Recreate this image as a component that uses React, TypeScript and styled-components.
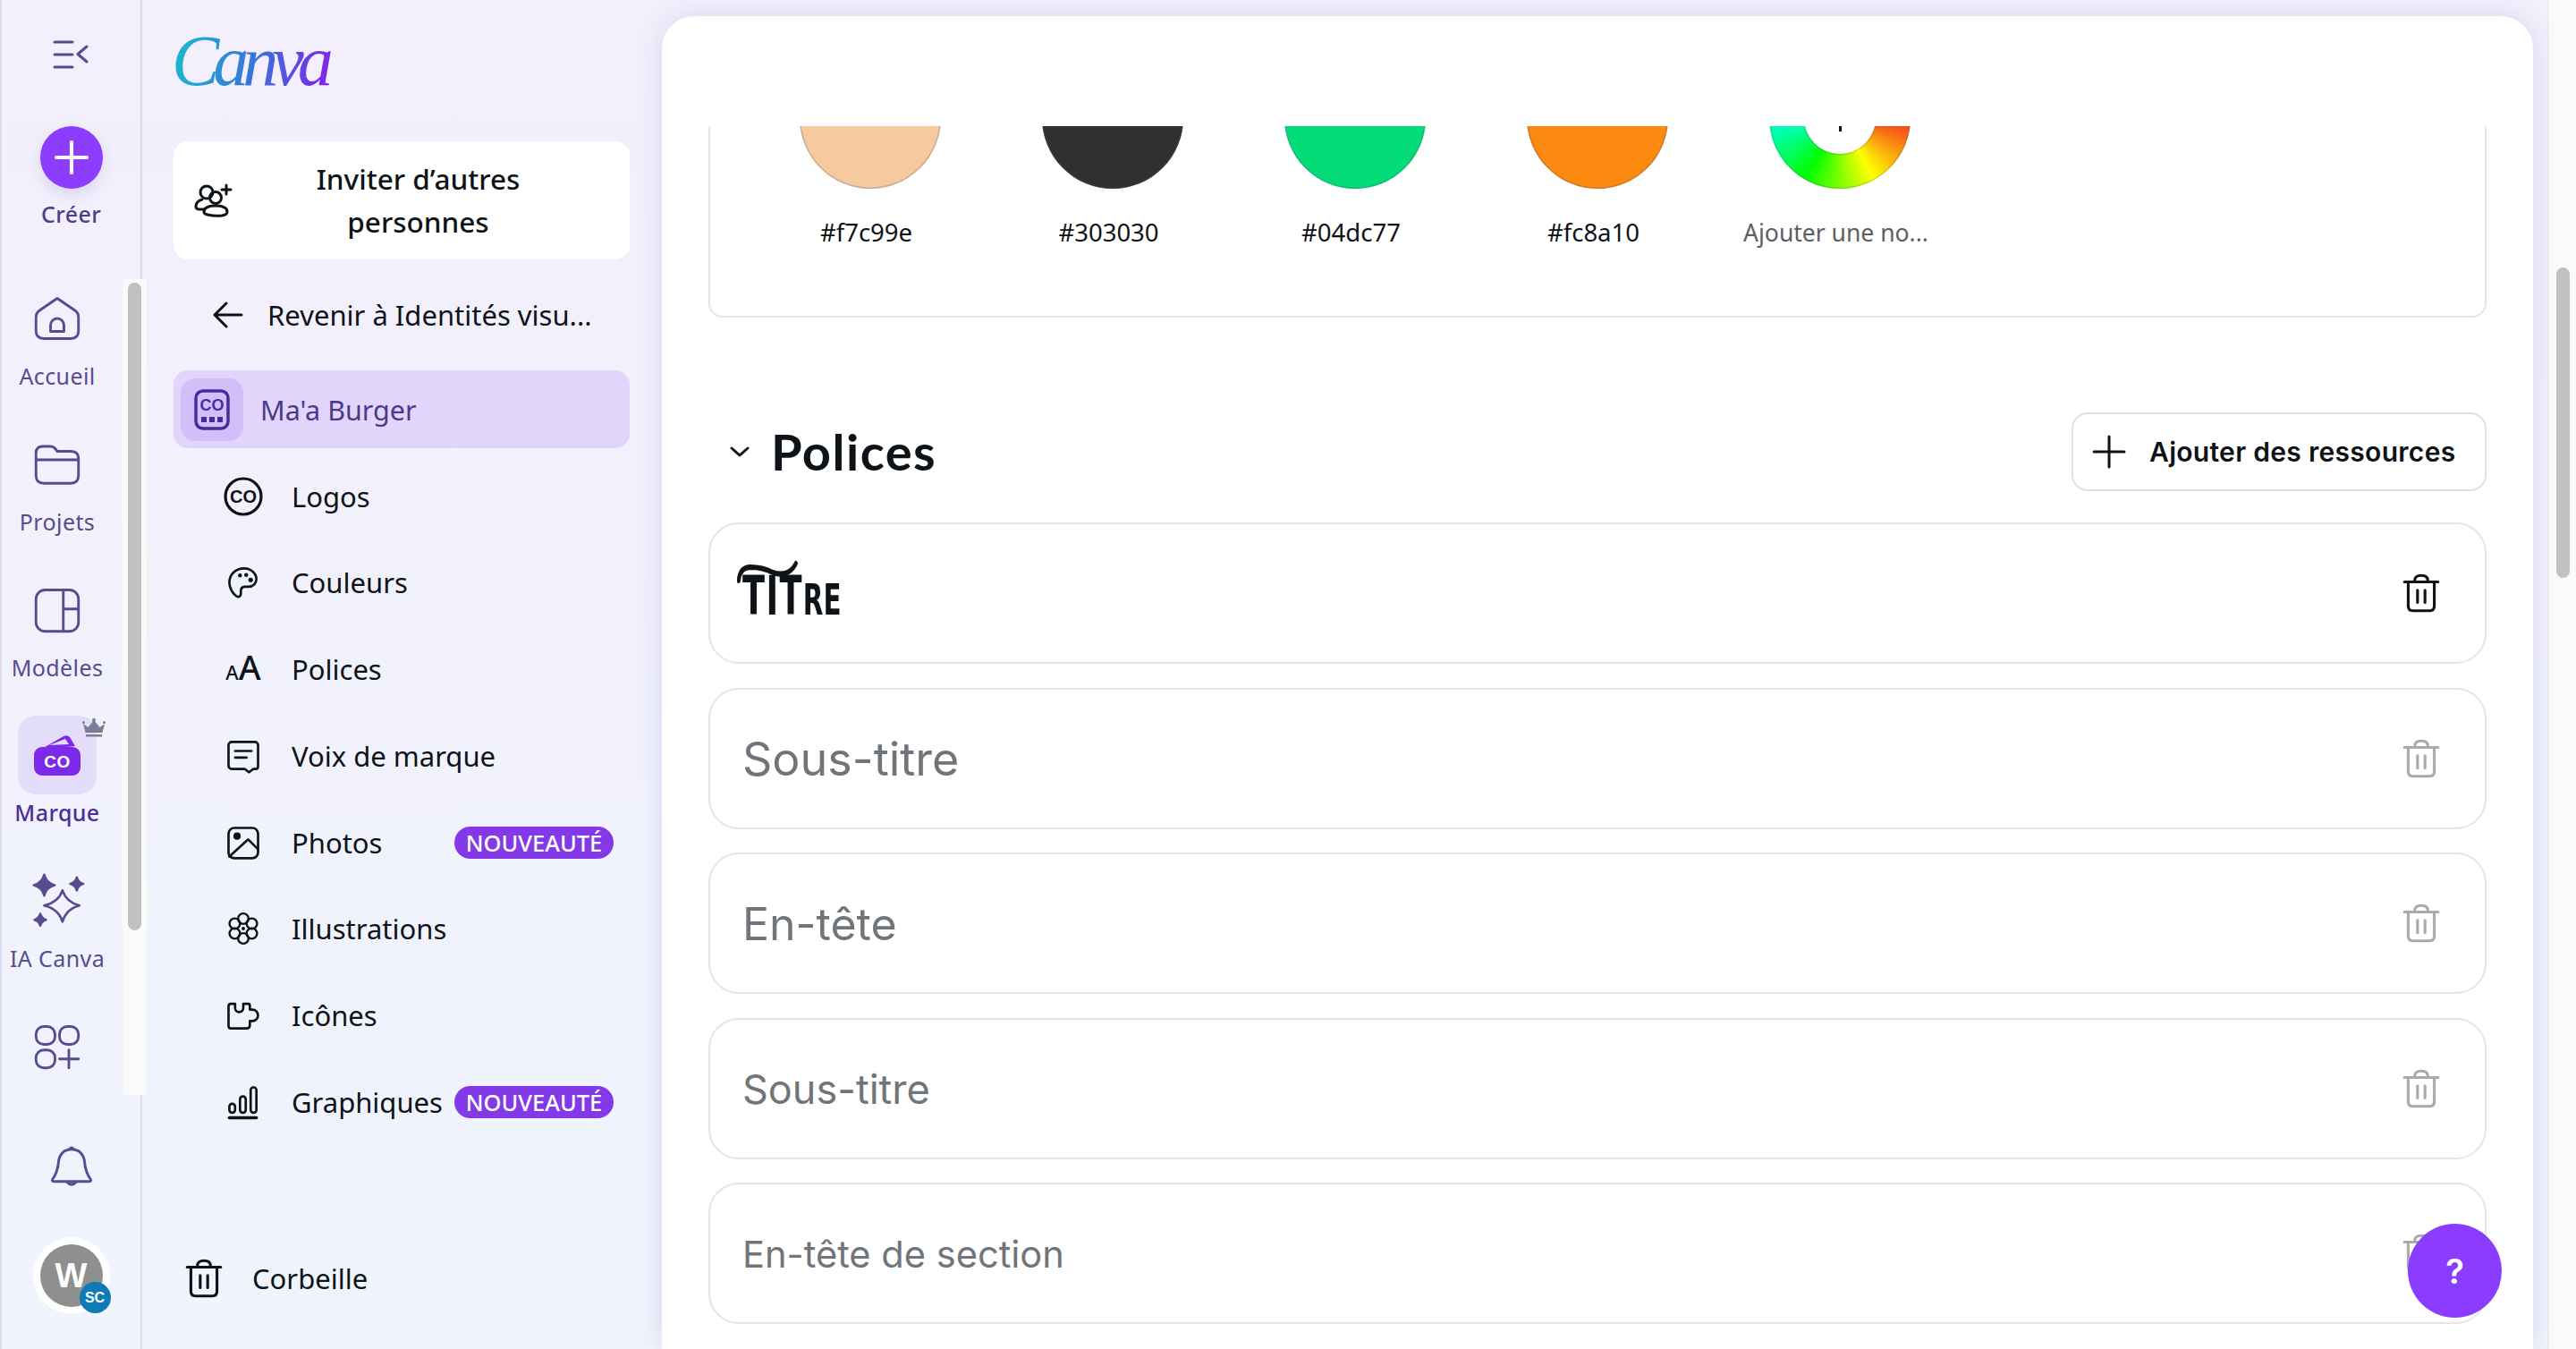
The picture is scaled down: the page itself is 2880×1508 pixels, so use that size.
import React from 'react'
import styled, { createGlobalStyle } from 'styled-components'
import { Plus } from 'lucide-react'

const GlobalStyle = createGlobalStyle`
    html, body {
        margin: 0;
        padding: 0;
        width: 2880px;
        height: 1508px;
        overflow: hidden;
        background: #f1f0fc;
    }
    * {
        box-sizing: border-box;
    }
`

const purple = '#8b3dff'
const railInk = '#5a4a8f'
const ink = '#0e1318'
const bodyFont = `"Noto Sans", "Liberation Sans", sans-serif`

interface IconProps {
    size?: number,
    color?: string,
    weight?: number
}

function Svg({ size = 44, color = ink, weight = 1.6, children }: IconProps & { children: React.ReactNode }) {
    return (
        <svg width={size} height={size} viewBox="0 0 24 24" fill="none" stroke={color} strokeWidth={weight} strokeLinecap="round" strokeLinejoin="round">
            {children}
        </svg>
    )
}

const HomeIcon = (p: IconProps) => (
    <Svg {...p}>
        <path d="M2.5 11.5q0-2 1.6-3.1L12 3l7.9 5.4q1.6 1.1 1.6 3.1v6q0 3.500-3.500 3.500H6q-3.500 0-3.500-3.500z" />
        <path d="M9 17.8V15a3 3 0 0 1 6 0v2.800z" />
    </Svg>
)
const FolderIcon = (p: IconProps) => (
    <Svg {...p}>
        <path d="M2.5 7q0-3 3-3H9q1.300 0 2 .9l1 1.300h6q3.500 0 3.500 3.300v7.500q0 3.500-3.500 3.500H6q-3.500 0-3.500-3.500z" />
        <path d="M2.5 10h19" />
    </Svg>
)
const TemplateIcon = (p: IconProps) => (
    <Svg {...p}>
        <rect x="2.5" y="3" width="19" height="18.5" rx="4" />
        <path d="M14.7 3v18.500M14.700 11.500h6.800" />
    </Svg>
)
const SparkIcon = (p: IconProps) => (
    <Svg {...p}>
        <path d="M14 8q1.500 4.500 6.500 5.800-5 1.300-6.500 6.200-1.500-4.900-7-6.200 5.500-1.300 7-5.800z" />
        <path d="M7 2q.8 3.200 4 4-3.200.8-4 4-.8-3.200-4-4 3.200-.8 4-4zM19.500 3q.5 2 2.500 2.500-2 .5-2.500 2.500-.5-2-2.500-2.500 2-.5 2.500-2.500zM5.500 17q.5 1.700 2.200 2.300-1.700.5-2.200 2.200-.5-1.700-2.200-2.200 1.700-.6 2.200-2.300z" fill={p.color} />
    </Svg>
)
const AppsIcon = (p: IconProps) => (
    <Svg {...p}>
        <rect x="2.5" y="3" width="8.5" height="8" rx="3.5" />
        <rect x="13" y="3" width="8.5" height="8" rx="3.5" />
        <rect x="2.5" y="13.5" width="8.5" height="8" rx="3.5" />
        <path d="M17.2 13.500v8M13 17.500h8.500" />
    </Svg>
)
const BellIcon = (p: IconProps) => (
    <Svg {...p}>
        <path d="M12 3c-4 0-6.200 2.800-6.500 6.500-.3 4-1.200 6-3 8.500-.3.500 0 1 .6 1h17.800c.6 0 .9-.5.6-1-1.800-2.500-2.700-4.500-3-8.500C18.200 5.800 16 3 12 3z" />
        <path d="M10 19.500q2 2 4 0M11 3q1-1.500 2 0" />
    </Svg>
)
const MenuIcon = () => (
    <svg width="44" height="36" viewBox="0 0 44 36" fill="none" stroke={railInk} strokeWidth="3" strokeLinecap="round" strokeLinejoin="round">
        <path d="M3 4h20M3 18h20M3 32h20M39 9l-10 8.500 10 8.500" />
    </svg>
)
const CrownIcon = () => (
    <svg width="26" height="22" viewBox="0 0 26 22" fill="#7c7f93">
        <path d="M1 6l5.500 4L13 2l6.500 8L25 6l-2.500 10h-19zM4 18h18v2.500H4z" />
        <circle cx="1.5" cy="4.5" r="1.5" />
        <circle cx="13" cy="2" r="2" />
        <circle cx="24.5" cy="4.5" r="1.5" />
    </svg>
)
const BrandIcon = () => (
    <svg width="54" height="48" viewBox="0 0 54 48">
        <path d="M8 18L34 3q4-2 7 1l6 10z" fill="#7d2ae8" />
        <path d="M18 13L36 6l4 6z" fill="#e3dcf9" />
        <rect x="1" y="15" width="52" height="32" rx="9" fill="#7d2ae8" />
        <text x="27" y="38" textAnchor="middle" fontFamily="Liberation Sans" fontWeight="700" fontSize="19" fill="#fff" letterSpacing="0.5">CO</text>
    </svg>
)
const InviteIcon = () => (
    <svg width="46" height="44" viewBox="0 0 46 44" fill="none" stroke={ink} strokeWidth="3" strokeLinecap="round" strokeLinejoin="round">
        <circle cx="14" cy="13" r="7" />
        <circle cx="24" cy="19" r="6.5" />
        <path d="M9 21q-7 2-7 8 0 3 5 3h5" />
        <path d="M15 38q-4-1-4-3 0-7 13-7t13 7q0 3-6 4-8 1-16-1z" />
        <path d="M36 5v10M31 10h10" />
    </svg>
)
const BrandKitIcon = () => (
    <svg width="40" height="46" viewBox="0 0 40 46" fill="none">
        <rect x="2" y="2" width="36" height="42" rx="8" stroke="#4b2a9e" strokeWidth="3.5" />
        <text x="20" y="24" textAnchor="middle" fontFamily="Liberation Sans" fontWeight="700" fontSize="18" fill="#4b2a9e">CO</text>
        <path d="M8 31h6v6H8zM17 31h6v6h-6zM26 31h6v6h-6z" fill="#4b2a9e" />
    </svg>
)
const LogoIcon = () => (
    <svg width="44" height="44" viewBox="0 0 44 44" fill="none">
        <circle cx="22" cy="22" r="20" stroke={ink} strokeWidth="3.2" />
        <text x="22" y="29" textAnchor="middle" fontFamily="Liberation Sans" fontWeight="700" fontSize="20" fill={ink}>CO</text>
    </svg>
)
const PaletteIcon = (p: IconProps) => (
    <Svg {...p}>
        <path d="M12.5 3.500c-5 0-9 3.500-9 8.500 0 3.500 2 7 4.500 8.500 1.500.8 2.500-.2 2.500-1.500v-1.500c0-1.800 1-2.800 2.500-2.800h2c3 0 5-2 5-4.700 0-3.500-3.500-6.500-7.500-6.500z" />
        <circle cx="10" cy="7.8" r="1.2" fill={ink} stroke="none" />
        <circle cx="13.8" cy="7.5" r="1.2" fill={ink} stroke="none" />
        <circle cx="16.5" cy="10.5" r="1.4" fill={ink} stroke="none" />
    </Svg>
)
const ChatIcon = (p: IconProps) => (
    <Svg {...p}>
        <path d="M5 3.500h14a2 2 0 0 1 2 2v13q0 1.500-1.500 1.500H18l-2.500 2-2.500-2H5a2 2 0 0 1-2-2V5.500a2 2 0 0 1 2-2z" />
        <path d="M7 9h10M7 13h7" />
    </Svg>
)
const ImageIcon = (p: IconProps) => (
    <Svg {...p}>
        <rect x="3" y="3" width="18" height="18.5" rx="3.5" />
        <circle cx="8.2" cy="8" r="1.5" fill={ink} />
        <path d="M3.500 20.500L15 10l6 6" />
    </Svg>
)
const FlowerIcon = (p: IconProps) => (
    <Svg {...p}>
        <circle cx="12" cy="6" r="3.2" />
        <circle cx="17.2" cy="9" r="3.2" />
        <circle cx="17.2" cy="15" r="3.2" />
        <circle cx="12" cy="18" r="3.2" />
        <circle cx="6.8" cy="15" r="3.2" />
        <circle cx="6.8" cy="9" r="3.2" />
        <circle cx="12" cy="12" r="1.1" fill={ink} stroke="none" />
    </Svg>
)
const PuzzleIcon = (p: IconProps) => (
    <Svg {...p}>
        <path d="M3 6.500Q3 5 4.500 5H7v2.500a2.500 2.500 0 0 0 5 0V5h3q1 0 1 1v2.500h1.500a3.500 3.500 0 0 1 0 7H16V18q0 2-2 2H4.500Q3 20 3 18.500z" />
    </Svg>
)
const ChartIcon = (p: IconProps) => (
    <Svg {...p}>
        <rect x="3.500" y="13" width="3.500" height="5.500" rx="1.700" />
        <rect x="10" y="8.500" width="3.500" height="10" rx="1.700" />
        <rect x="16.500" y="3" width="3.500" height="15.500" rx="1.700" />
        <path d="M3.500 21.500H20" strokeWidth="1.900" />
    </Svg>
)
const TrashIcon = ({ color = ink }: { color?: string }) => (
    <Svg size={50} color={color} weight={1.5}>
        <path d="M3 6h18M8.500 6V5.200q0-2.700 3.500-2.700t3.500 2.700V6" />
        <path d="M5 6v13q0 2.500 2.500 2.500h9q2.500 0 2.500-2.500V6" />
        <path d="M10 10.500v6.500M14 10.500v6.500" />
    </Svg>
)
const ArrowIcon = () => (
    <svg width="36" height="32" viewBox="0 0 36 32" fill="none" stroke={ink} strokeWidth="3" strokeLinecap="round" strokeLinejoin="round">
        <path d="M33 16H3M16 3L3 16l13 13" />
    </svg>
)
const ChevronIcon = () => (
    <svg width="22" height="14" viewBox="0 0 22 14" fill="none" stroke={ink} strokeWidth="3" strokeLinecap="round" strokeLinejoin="round">
        <path d="M2 3l9 8 9-8" />
    </svg>
)

const swatches = ['#f7c99e', '#303030', '#04dc77', '#fc8a10']
const fontRows = [
    { label: 'Sous-titre', size: 52 },
    { label: 'En-tête', size: 50 },
    { label: 'Sous-titre', size: 45 },
    { label: 'En-tête de section', size: 41.6 }
]

function App() {
    const railItems = [
        { label: 'Accueil', icon: <HomeIcon size={60} color={railInk} weight={1.15} /> },
        { label: 'Projets', icon: <FolderIcon size={60} color={railInk} weight={1.15} /> },
        { label: 'Modèles', icon: <TemplateIcon size={60} color={railInk} weight={1.15} /> },
        { label: 'Marque', icon: <BrandIcon />, active: true },
        { label: 'IA Canva', icon: <SparkIcon size={70} color={railInk} weight={0.9} /> },
        { label: 'Applis', icon: <AppsIcon size={60} color={railInk} weight={1.15} /> }
    ]

    const menuItems = [
        { label: 'Logos', icon: <LogoIcon /> },
        { label: 'Couleurs', icon: <PaletteIcon size={54} weight={1.45} /> },
        { label: 'Polices', icon: <FontGlyph><small>A</small>A</FontGlyph> },
        { label: 'Voix de marque', icon: <ChatIcon size={54} weight={1.45} /> },
        { label: 'Photos', icon: <ImageIcon size={54} weight={1.45} />, fresh: true },
        { label: 'Illustrations', icon: <FlowerIcon size={56} weight={1.3} /> },
        { label: 'Icônes', icon: <PuzzleIcon size={56} weight={1.45} /> },
        { label: 'Graphiques', icon: <ChartIcon size={56} weight={1.45} />, fresh: true }
    ]

    return (
        <Page>
            <GlobalStyle />
            <Rail>
                <RailTop>
                    <MenuButton><MenuIcon /></MenuButton>
                    <CreateButton><Plus size={58} color="#fff" strokeWidth={1.7} /></CreateButton>
                    <CreateLabel>Créer</CreateLabel>
                </RailTop>
                <RailMiddle>
                    <RailList>
                        {railItems.map(item => (
                            <RailItem key={item.label}>
                                <RailTile $active={item.active}>
                                    {item.icon}
                                    {item.active && <CrownBadge><CrownIcon /></CrownBadge>}
                                </RailTile>
                                <RailLabel $active={item.active}>{item.label}</RailLabel>
                            </RailItem>
                        ))}
                    </RailList>
                    <RailTrack><RailThumb /></RailTrack>
                </RailMiddle>
                <RailBottom>
                    <BellIcon size={54} color={railInk} weight={1.3} />
                    <Avatar>
                        <AvatarInner>W</AvatarInner>
                        <AvatarBadge>SC</AvatarBadge>
                    </Avatar>
                </RailBottom>
            </Rail>

            <Sidebar>
                <Logo>Canva</Logo>
                <InviteCard>
                    <InviteIcon />
                    <InviteText>Inviter d’autres personnes</InviteText>
                </InviteCard>
                <BackRow>
                    <ArrowIcon />
                    <span>Revenir à Identités visu...</span>
                </BackRow>
                <BrandRow>
                    <BrandTile><BrandKitIcon /></BrandTile>
                    <span>Ma'a Burger</span>
                </BrandRow>
                <MenuList>
                    {menuItems.map(item => (
                        <MenuRow key={item.label}>
                            <MenuIconBox>{item.icon}</MenuIconBox>
                            <span>{item.label}</span>
                            {item.fresh && <FreshBadge>NOUVEAUTÉ</FreshBadge>}
                        </MenuRow>
                    ))}
                </MenuList>
                <TrashRow>
                    <TrashIcon />
                    <span>Corbeille</span>
                </TrashRow>
            </Sidebar>

            <Panel>
                <PanelHeader />
                <PanelScroll>
                    <ColorCard>
                        {swatches.map(hex => (
                            <SwatchColumn key={hex}>
                                <Swatch $color={hex} />
                                <SwatchLabel>{hex}</SwatchLabel>
                            </SwatchColumn>
                        ))}
                        <SwatchColumn>
                            <AddSwatch><AddTick /></AddSwatch>
                            <SwatchLabel $muted>Ajouter une no...</SwatchLabel>
                        </SwatchColumn>
                    </ColorCard>

                    <SectionHeader>
                        <SectionTitle>
                            <ChevronIcon />
                            <h2>Polices</h2>
                        </SectionTitle>
                        <AddButton>
                            <Plus size={58} color={ink} strokeWidth={1.25} />
                            <span>Ajouter des ressources</span>
                        </AddButton>
                    </SectionHeader>

                    <FontList>
                        <FontRow>
                            <TitleSample>
                                <Swash viewBox="0 0 116 30" fill="none" stroke={ink} strokeWidth="6" strokeLinecap="round">
                                    <path d="M4 26Q5 12 22 11q22 0 38 6 26 6 38-10" />
                                </Swash>
                                TIT<small>RE</small>
                            </TitleSample>
                            <TrashIcon />
                        </FontRow>
                        {fontRows.map(row => (
                            <FontRow key={row.label + row.size}>
                                <FontSample $size={row.size}>{row.label}</FontSample>
                                <TrashIcon color="#a8abae" />
                            </FontRow>
                        ))}
                    </FontList>
                </PanelScroll>
                <HelpButton>?</HelpButton>
            </Panel>

            <PageTrack><PageThumb /></PageTrack>
        </Page>
    )
}

const Page = styled.div`
    display: flex;
    width: 2880px;
    height: 1508px;
    overflow: hidden;
    background: linear-gradient(180deg, #f3effc 0%, #eff4fd 100%);
    font-family: ${bodyFont};
    color: ${ink};
`

const Rail = styled.nav`
    position: relative;
    z-index: 1;
    flex: 0 0 159px;
    min-width: 0;
    display: flex;
    flex-direction: column;
    border-left: 2px solid #dedaf0;
`

const RailTop = styled.div`
    height: 312px;
    flex: none;
    display: flex;
    flex-direction: column;
    align-items: center;
    padding-top: 43px;
    border-right: 2px solid #dcd8ee;
`

const MenuButton = styled.div`
    height: 36px;
    margin-left: 1px;
`

const CreateButton = styled.div`
    width: 70px;
    height: 70px;
    margin-top: 62px;
    border-radius: 50%;
    background: ${purple};
    box-shadow: 0 6px 16px rgba(80, 60, 140, 0.15);
    display: flex;
    align-items: center;
    justify-content: center;
`

const CreateLabel = styled.div`
    margin-top: 12px;
    font-size: 25px;
    line-height: 32px;
    letter-spacing: 0.4px;
    font-weight: 500;
    color: #4f3d86;
`

const RailMiddle = styled.div`
    flex: 0 0 912px;
    display: flex;
    width: 164px;
    margin-left: -2px;
    overflow: hidden;
`

const RailList = styled.div`
    flex: 0 0 128px;
    display: flex;
    flex-direction: column;
    margin-right: 9px;
`

const RailItem = styled.div`
    flex: 0 0 162.8px;
    display: flex;
    flex-direction: column;
    align-items: center;
`

const RailTile = styled.div<{ $active?: boolean }>`
    position: relative;
    flex: none;
    width: 88px;
    height: 88px;
    border-radius: 20px;
    display: flex;
    align-items: center;
    justify-content: center;
    background: ${p => p.$active ? '#e4ddfa' : 'transparent'};
`

const CrownBadge = styled.div`
    position: absolute;
    top: 3px;
    right: -10px;
    line-height: 0;
`

const RailLabel = styled.div<{ $active?: boolean }>`
    margin-top: 4px;
    font-size: 25px;
    line-height: 32px;
    letter-spacing: 0.4px;
    white-space: nowrap;
    font-weight: ${p => p.$active ? 500 : 400};
    color: ${p => p.$active ? '#4b2f96' : railInk};
`

const RailTrack = styled.div`
    flex: 0 0 27px;
    background: #fafafa;
    padding: 4px 6px 0;
`

const RailThumb = styled.div`
    width: 15px;
    height: 724px;
    border-radius: 8px;
    background: #c1c1c1;
`

const RailBottom = styled.div`
    flex: 1;
    display: flex;
    flex-direction: column;
    align-items: center;
    padding-top: 54px;
    gap: 51px;
    border-right: 2px solid #d9ddec;
`

const Avatar = styled.div`
    position: relative;
    flex: none;
    width: 86px;
    height: 86px;
    border-radius: 50%;
    background: #fff;
    display: flex;
    align-items: center;
    justify-content: center;
`

const AvatarInner = styled.div`
    width: 70px;
    height: 70px;
    border-radius: 50%;
    background: #8f8f8f;
    color: #fff;
    font-family: "Liberation Sans", sans-serif;
    font-weight: 700;
    font-size: 38px;
    display: flex;
    align-items: center;
    justify-content: center;
`

const AvatarBadge = styled.div`
    position: absolute;
    right: -1px;
    bottom: 1px;
    width: 35px;
    height: 35px;
    border-radius: 50%;
    background: #0f7ab5;
    color: #fff;
    font-family: "Liberation Sans", sans-serif;
    font-weight: 700;
    font-size: 16px;
    display: flex;
    align-items: center;
    justify-content: center;
`

const Sidebar = styled.aside`
    flex: 0 0 581px;
    display: flex;
    flex-direction: column;
    padding: 0 36px 36px 35px;
`

const Logo = styled.div`
    flex: 0 0 158px;
    width: 190px;
    margin-left: -2px;
    padding-top: 22px;
    font-family: "Liberation Serif", serif;
    font-style: italic;
    font-size: 80px;
    line-height: 92px;
    letter-spacing: -7px;
    background: linear-gradient(100deg, #17c3c9 0%, #3a70dc 50%, #7d2ae8 85%);
    background-clip: text;
    -webkit-background-clip: text;
    color: transparent;
`

const InviteCard = styled.div`
    flex: 0 0 132px;
    display: flex;
    align-items: center;
    padding: 0 32px 0 23px;
    border-radius: 16px;
    background: #fff;
`

const InviteText = styled.div`
    flex: 1;
    padding: 0 50px;
    text-align: center;
    font-size: 31.5px;
    line-height: 48px;
    font-weight: 500;
`

const BackRow = styled.div`
    flex: 0 0 87px;
    margin-top: 18px;
    display: flex;
    align-items: center;
    gap: 26px;
    padding-left: 43px;
    font-size: 31px;
    white-space: nowrap;
`

const BrandRow = styled.div`
    flex: 0 0 87px;
    margin-top: 19px;
    display: flex;
    align-items: center;
    gap: 19px;
    padding-left: 8px;
    border-radius: 16px;
    background: #e1d5fb;
    font-size: 30.5px;
    color: #4b3a88;
`

const BrandTile = styled.div`
    width: 70px;
    height: 70px;
    border-radius: 16px;
    background: #d2bffa;
    display: flex;
    align-items: center;
    justify-content: center;
`

const MenuList = styled.div`
    display: flex;
    flex-direction: column;
    gap: 9.8px;
    margin-top: 10px;
`

const MenuRow = styled.div`
    height: 87px;
    display: flex;
    align-items: center;
    padding: 0 18px 0 56px;
    font-size: 31px;
    white-space: nowrap;
`

const MenuIconBox = styled.div`
    flex: 0 0 44px;
    min-width: 0;
    height: 44px;
    margin-right: 32px;
    display: flex;
    align-items: center;
    justify-content: center;
`

const FontGlyph = styled.div`
    font-family: ${bodyFont};
    font-weight: 500;
    font-size: 38px;
    line-height: 44px;
    white-space: nowrap;
    small {
        font-size: 22px;
    }
`

const FreshBadge = styled.div`
    margin-left: auto;
    width: 178px;
    height: 36px;
    border-radius: 18px;
    background: #8339e8;
    color: #fff;
    font-size: 25.5px;
    font-weight: 500;
    line-height: 36px;
    text-align: center;
`

const TrashRow = styled.div`
    margin-top: auto;
    height: 87px;
    display: flex;
    align-items: center;
    gap: 29px;
    padding-left: 9px;
    font-size: 31px;
`

const Panel = styled.main`
    position: relative;
    flex: 0 0 2092px;
    margin-top: 18px;
    display: flex;
    flex-direction: column;
    border-radius: 36px 36px 0 0;
    background: #fff;
    box-shadow: 0 0 30px rgba(70, 70, 150, 0.14);
`

const PanelHeader = styled.div`
    flex: 0 0 123px;
`

const PanelScroll = styled.div`
    flex: 1;
    min-height: 0;
    overflow: hidden;
    padding: 0 52px;
`

const ColorCard = styled.section`
    height: 344px;
    margin-top: -130px;
    padding: 40px 0 0 43px;
    display: flex;
    border: 2px solid #e4e5e7;
    border-radius: 16px;
`

const SwatchColumn = styled.div`
    flex: 0 0 271px;
    display: flex;
    flex-direction: column;
    align-items: center;
`

const Swatch = styled.div<{ $color: string }>`
    width: 158px;
    height: 158px;
    border-radius: 50%;
    background: ${p => p.$color};
    box-shadow: inset 0 0 0 1.5px rgba(64, 87, 109, 0.25);
`

const AddSwatch = styled.div`
    position: relative;
    width: 158px;
    height: 158px;
    border-radius: 50%;
    background: conic-gradient(from 90deg, #f5331f, #ffff00 60deg, #00ff00 120deg, #00ffe0 180deg, #0040ff 240deg, #ff00ff 300deg, #f5331f);
    box-shadow: inset 0 0 0 1.5px rgba(64, 87, 109, 0.2);
    &::after {
        content: '';
        position: absolute;
        inset: 39px;
        border-radius: 50%;
        background: #fff;
        box-shadow: 0 0 0 1.5px rgba(64, 87, 109, 0.2);
    }
`

const AddTick = styled.div`
    position: absolute;
    z-index: 1;
    left: 78px;
    top: 80px;
    width: 3px;
    height: 14px;
    background: ${ink};
`

const SwatchLabel = styled.div<{ $muted?: boolean }>`
    margin: 30px 8px 0 0;
    font-size: ${p => p.$muted ? 26.5 : 27.5}px;
    line-height: 38px;
    white-space: nowrap;
    color: ${p => p.$muted ? '#5b5e63' : ink};
`

const SectionHeader = styled.div`
    margin-top: 106px;
    height: 88px;
    display: flex;
    align-items: center;
    justify-content: space-between;
`

const SectionTitle = styled.div`
    display: flex;
    align-items: center;
    gap: 24px;
    padding-left: 24px;
    h2 {
        margin: 0;
        font-family: Lato, sans-serif;
        font-size: 56px;
        font-weight: 700;
        letter-spacing: 1.5px;
        line-height: 64px;
    }
`

const AddButton = styled.div`
    width: 464px;
    height: 88px;
    display: flex;
    align-items: center;
    gap: 16px;
    padding-left: 11px;
    border: 2px solid #dfe0e2;
    border-radius: 18px;
    font-family: Inter, sans-serif;
    font-size: 30px;
    font-weight: 600;
    letter-spacing: 0.3px;
    white-space: nowrap;
`

const FontList = styled.div`
    margin-top: 35px;
    display: flex;
    flex-direction: column;
    gap: 26.5px;
`

const FontRow = styled.div`
    flex: 0 0 158px;
    display: flex;
    align-items: center;
    justify-content: space-between;
    padding: 0 46px 0 36px;
    border: 2px solid #e4e5e7;
    border-radius: 34px;
`

const FontSample = styled.div<{ $size: number }>`
    font-family: Inter, sans-serif;
    font-size: ${p => p.$size}px;
    margin-top: 2px;
    color: #70757a;
`

const TitleSample = styled.div`
    position: relative;
    margin-top: 10px;
    font-family: "DejaVu Sans Condensed", "DejaVu Sans", sans-serif;
    font-weight: 700;
    font-size: 60px;
    line-height: 60px;
    letter-spacing: 2px;
    transform: scaleX(0.68);
    transform-origin: left center;
    small {
        font-size: 48px;
        letter-spacing: 0;
    }
`

const Swash = styled.svg`
    position: absolute;
    left: -10px;
    top: -13px;
    width: 116px;
    height: 30px;
`

const HelpButton = styled.div`
    position: absolute;
    right: 35px;
    bottom: 35px;
    width: 105px;
    height: 105px;
    border-radius: 50%;
    background: ${purple};
    color: #fff;
    font-family: Inter, sans-serif;
    font-size: 38px;
    font-weight: 600;
    display: flex;
    align-items: center;
    justify-content: center;
`

const PageTrack = styled.div`
    flex: 0 0 32px;
    margin-left: 16px;
    background: #fafafa;
    border-left: 2px solid #eeeeee;
    padding: 299px 0 0 8px;
`

const PageThumb = styled.div`
    width: 15px;
    height: 347px;
    border-radius: 8px;
    background: #c1c1c1;
`

export default App
